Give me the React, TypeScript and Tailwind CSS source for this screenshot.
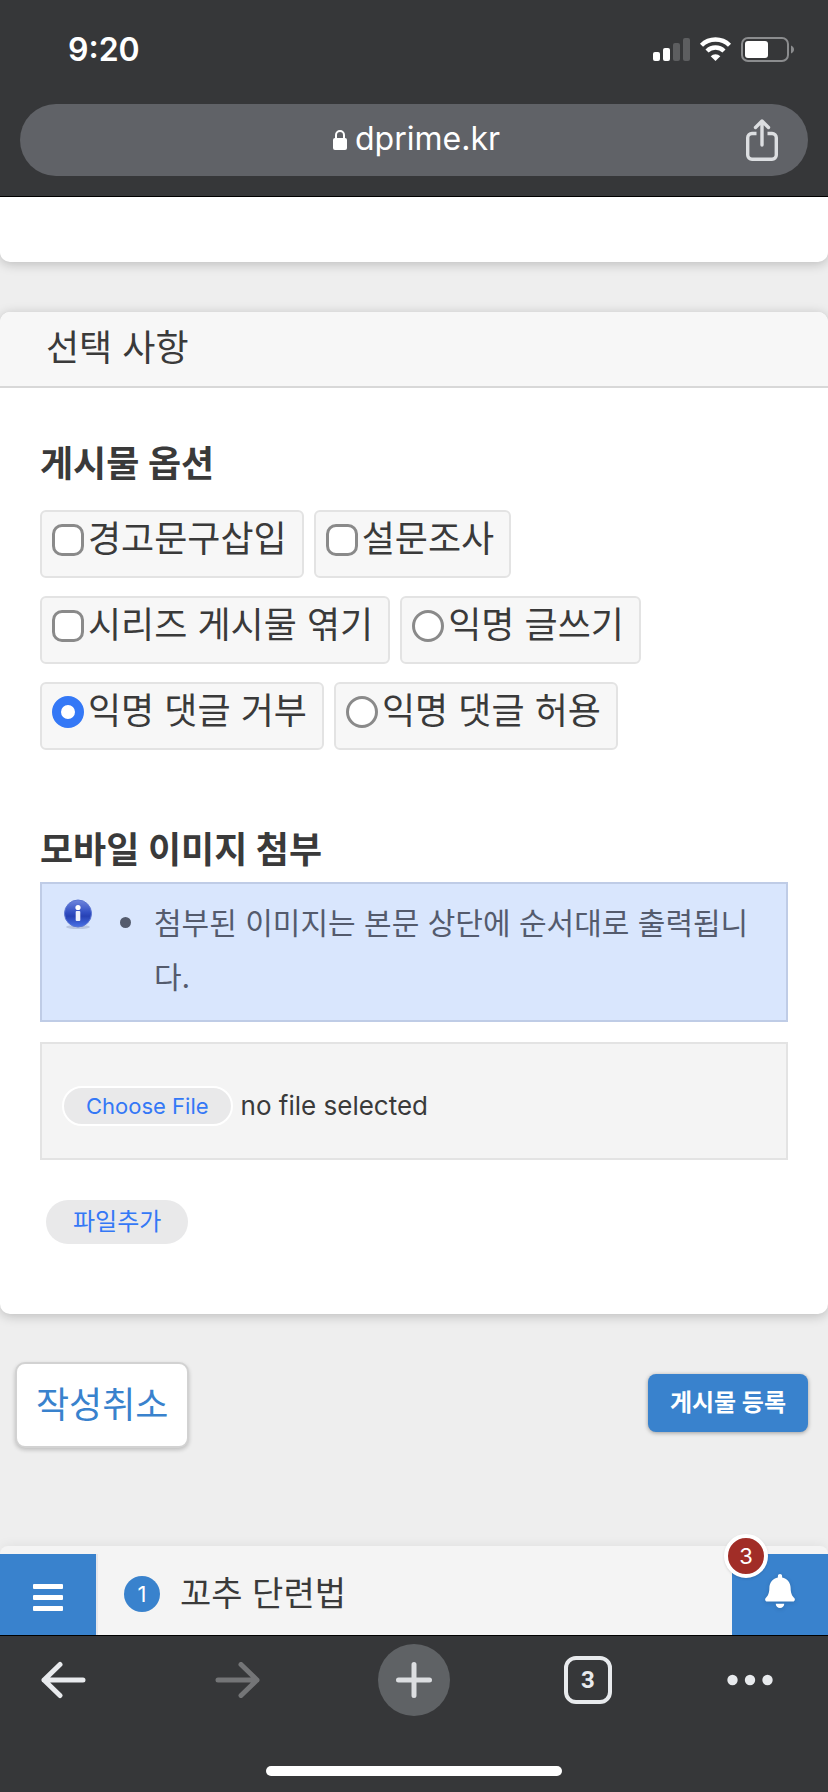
import { useRef, useState } from "react";
import { FaBell } from "react-icons/fa";

interface IOption {
  id: string;
  label: string;
  type: "checkbox" | "radio";
  group?: string;
  checked?: boolean;
}

const OPTIONS: IOption[] = [
  { id: "warning", label: "경고문구삽입", type: "checkbox" },
  { id: "survey", label: "설문조사", type: "checkbox" },
  { id: "series", label: "시리즈 게시물 엮기", type: "checkbox" },
  { id: "anon-post", label: "익명 글쓰기", type: "radio", group: "anonymous" },
  {
    id: "anon-deny",
    label: "익명 댓글 거부",
    type: "radio",
    group: "anonymous",
    checked: true,
  },
  { id: "anon-allow", label: "익명 댓글 허용", type: "radio", group: "anonymous" },
];

function StatusIcons() {
  return (
    <svg width="142" height="26" viewBox="0 0 142 26" fill="none" aria-hidden="true">
      <rect x="0" y="15" width="7" height="9" rx="2" fill="#fff" />
      <rect x="10" y="11" width="7" height="13" rx="2" fill="#fff" />
      <rect x="20" y="6" width="7" height="18" rx="2" fill="#5d5e60" />
      <rect x="30" y="1" width="7" height="23" rx="2" fill="#5d5e60" />
      <path d="M48.5 8.2a20 20 0 0 1 28 0" stroke="#fff" strokeWidth="4.4" />
      <path d="M54 14a12.2 12.2 0 0 1 17 0" stroke="#fff" strokeWidth="4.4" />
      <path d="M62.5 24l-4.8-4.8a6.8 6.8 0 0 1 9.6 0z" fill="#fff" />
      <rect x="89" y="1" width="46" height="23" rx="6" stroke="#8b8c8e" strokeWidth="2" />
      <rect x="92" y="4" width="23" height="17" rx="3" fill="#fff" />
      <path d="M138 8.5c4 1.4 4 6.6 0 8z" fill="#8b8c8e" />
    </svg>
  );
}

function BrowserHeader() {
  return (
    <header className="border-b border-black bg-[#363739] px-5 pb-5 text-white">
      <div className="flex h-[104px] items-center justify-between pb-1 pl-12 pr-[13px]">
        <span className="text-[32px] font-semibold leading-10">9:20</span>
        <StatusIcons />
      </div>
      <div className="grid h-[72px] grid-cols-[1fr_auto_1fr] items-center rounded-full bg-[#606267] pr-[29px]">
        <span />
        <div className="flex items-center gap-2 pl-[34px]">
          <svg width="14" height="20" viewBox="0 0 14 20" aria-hidden="true">
            <path d="M3 9V5a4 4 0 0 1 8 0v4" fill="none" stroke="#fff" strokeWidth="2" />
            <rect y="8" width="14" height="12" rx="2" fill="#fff" />
          </svg>
          <span className="pb-[2px] text-[32px] leading-10">dprime.kr</span>
        </div>
        <button type="button" aria-label="Share" className="justify-self-end">
          <svg
            width="34"
            height="42"
            viewBox="0 0 34 42"
            fill="none"
            stroke="#dcdee1"
            strokeWidth="3.4"
            strokeLinejoin="round"
          >
            <path d="M11.5 14.5H7a4.3 4.3 0 0 0-4.3 4.3V36A4.3 4.3 0 0 0 7 40.3h20a4.3 4.3 0 0 0 4.3-4.3V18.8a4.3 4.3 0 0 0-4.3-4.3h-4.5" />
            <path d="M17 26V2.5M10.5 8.5L17 2l6.5 6.5" strokeLinecap="round" />
          </svg>
        </button>
      </div>
    </header>
  );
}

function OptionChip({ option }: { option: IOption }) {
  const shape = option.type === "radio" ? "rounded-full" : "rounded-[10px]";
  const checked =
    option.type === "radio" ? "checked:border-[9px]" : "checked:bg-[#3478f6]";

  return (
    <label
      htmlFor={option.id}
      className="flex h-[68px] items-center gap-1 rounded-md border-2 border-[#e3e3e3] bg-[#f7f7f7] pb-2 pl-[10px] pr-[15px]"
    >
      <input
        id={option.id}
        type={option.type}
        name={option.group ?? option.id}
        defaultChecked={option.checked}
        className={`size-8 shrink-0 appearance-none border-[3px] border-[#8a8a8a] bg-white checked:border-[#3478f6] ${shape} ${checked}`}
      />
      <span className="pb-[2px] text-[36px] leading-10">{option.label}</span>
    </label>
  );
}

function InfoIcon() {
  return (
    <svg width="30" height="34" viewBox="0 -2 30 34" className="shrink-0" aria-hidden="true">
      <defs>
        <linearGradient id="info-fill" x1="0" y1="0" x2="0" y2="1">
          <stop offset="0" stopColor="#6f86dc" />
          <stop offset="0.45" stopColor="#3350c4" />
          <stop offset="0.6" stopColor="#2741b4" />
          <stop offset="1" stopColor="#4a72e6" />
        </linearGradient>
      </defs>
      <ellipse cx="15" cy="29" rx="12" ry="2" fill="#9aa5c4" opacity="0.5" />
      <circle cx="15" cy="15.5" r="13.5" fill="url(#info-fill)" stroke="#5a74d2" />
      <circle cx="15" cy="9.5" r="2.6" fill="#fff" />
      <rect x="12.7" y="13" width="4.6" height="10" rx="1" fill="#eef1fb" />
    </svg>
  );
}

function FilePicker() {
  const inputRef = useRef<HTMLInputElement>(null);
  const [fileName, setFileName] = useState("no file selected");

  return (
    <div className="mt-5 flex h-[118px] items-center gap-2 border-2 border-[#e3e3e3] bg-[#f4f4f4] px-5 pt-[10px]">
      <input
        ref={inputRef}
        type="file"
        accept="image/*"
        aria-label="모바일 이미지 첨부"
        className="hidden"
        onChange={(e) => setFileName(e.target.files?.[0]?.name ?? "no file selected")}
      />
      <button
        type="button"
        onClick={() => inputRef.current?.click()}
        className="h-10 rounded-full border-2 border-white bg-[#e9e9ea] px-[22px] text-[22px] leading-8 text-[#3478f6]"
      >
        Choose File
      </button>
      <span className="text-[26px] leading-8">{fileName}</span>
    </div>
  );
}

function OptionsCard() {
  return (
    <section className="mt-[50px] overflow-hidden rounded-[10px] bg-white shadow-[0_2px_12px_rgba(0,0,0,0.22)]">
      <h2 className="h-[76px] border-b-2 border-[#d8d8d8] bg-[#f7f7f7] px-[46px] pt-3 text-[36px] leading-[48px]">
        선택 사항
      </h2>
      <div className="px-10 pb-[70px] pt-[52px]">
        <h3 className="text-[36px] font-bold leading-[48px]">게시물 옵션</h3>
        <div className="mt-[22px] flex max-w-[640px] flex-wrap gap-x-[10px] gap-y-[18px]">
          {OPTIONS.map((option) => (
            <OptionChip key={option.id} option={option} />
          ))}
        </div>

        <h3 className="mt-[76px] text-[36px] font-bold leading-[48px]">
          모바일 이미지 첨부
        </h3>
        <div className="mt-2 flex h-[140px] border-2 border-[#bfcce6] bg-[#d9e6fd] pl-[21px] pr-6 pt-3 text-[#545b6d]">
          <InfoIcon />
          <ul className="flex-1 pl-[27px]">
            <li className="flex gap-[23px] text-[30px] leading-[54px]">
              <span className="mt-[21px] size-[11px] shrink-0 rounded-full bg-[#545b6d]" />
              <span className="break-all">
                첨부된 이미지는 본문 상단에 순서대로 출력됩니다.
              </span>
            </li>
          </ul>
        </div>

        <FilePicker />

        <button
          type="button"
          className="ml-[6px] mt-10 block h-11 rounded-full bg-[#e9e9ea] px-[27px] text-2xl text-[#3478f6]"
        >
          파일추가
        </button>
      </div>
    </section>
  );
}

function SiteBar() {
  return (
    <nav className="flex h-[81px] bg-[#f4f4f4]">
      <button
        type="button"
        aria-label="메뉴"
        className="flex w-24 flex-col items-center justify-center gap-[6px] bg-[#3982cd] pt-[5px]"
      >
        <span className="h-[5px] w-[30px] rounded-[1px] bg-white" />
        <span className="h-[5px] w-[30px] rounded-[1px] bg-white" />
        <span className="h-[5px] w-[30px] rounded-[1px] bg-white" />
      </button>
      <a
        href="#rank-1"
        className="flex flex-1 items-center gap-5 border-l-2 border-[#e6e6ea] pb-[2px] pl-[26px]"
      >
        <span className="flex size-9 items-center justify-center rounded-full bg-[#3982cd] text-[22px] leading-8 text-white">
          1
        </span>
        <span className="text-[34px] leading-10">꼬추 단련법</span>
      </a>
      <button
        type="button"
        aria-label="알림"
        className="relative flex w-24 items-center justify-center bg-[#3982cd] pb-2 text-white"
      >
        <FaBell size={34} className="drop-shadow-sm" />
        <span className="absolute -left-2 -top-5 flex size-11 items-center justify-center rounded-full border-4 border-white bg-[#a12d27] text-[22px] shadow-sm">
          3
        </span>
      </button>
    </nav>
  );
}

function ArrowIcon() {
  return (
    <svg
      width="46"
      height="38"
      viewBox="0 0 46 38"
      fill="none"
      stroke="currentColor"
      strokeWidth="5"
      strokeLinecap="round"
      strokeLinejoin="round"
    >
      <path d="M43 19H4M20 3.5L4 19l16 15.5" />
    </svg>
  );
}

function BrowserToolbar() {
  return (
    <footer className="flex h-[157px] flex-col border-t border-black bg-[#363739] pb-4 pt-2 text-[#e8eaed]">
      <div className="grid grid-cols-[126fr_224fr_128fr_220fr_104fr] items-center justify-items-center pr-[26px]">
        <button type="button" aria-label="Back">
          <ArrowIcon />
        </button>
        <button
          type="button"
          aria-label="Forward"
          disabled
          className="rotate-180 text-[#747577]"
        >
          <ArrowIcon />
        </button>
        <button
          type="button"
          aria-label="New tab"
          className="flex size-[72px] items-center justify-center rounded-full bg-[#5f6265]"
        >
          <svg
            width="38"
            height="38"
            viewBox="0 0 38 38"
            stroke="#dcdee1"
            strokeWidth="5"
            strokeLinecap="round"
          >
            <path d="M19 3.5v31M3.5 19h31" />
          </svg>
        </button>
        <button
          type="button"
          aria-label="Tabs"
          className="flex size-12 items-center justify-center rounded-xl border-4 border-[#e8eaed] font-[Roboto] text-2xl font-bold"
        >
          3
        </button>
        <button type="button" aria-label="More">
          <svg width="46" height="12" viewBox="0 0 46 12" fill="currentColor">
            <circle cx="5.5" cy="6" r="5.2" />
            <circle cx="23" cy="6" r="5.2" />
            <circle cx="40.5" cy="6" r="5.2" />
          </svg>
        </button>
      </div>
      <div className="mx-auto mt-auto h-[10px] w-[296px] rounded-full bg-white" />
    </footer>
  );
}

export default function App() {
  return (
    <div className="flex min-h-screen flex-col bg-[#eeeeee] font-[Inter,'Noto_Sans_CJK_KR',sans-serif] text-[#3a3a3a]">
      <BrowserHeader />

      <main className="flex flex-1 flex-col overflow-hidden">
        <div className="h-[65px] rounded-b-[10px] bg-white shadow-[0_2px_12px_rgba(0,0,0,0.22)]" />
        <OptionsCard />
        <div className="mt-12 flex items-center justify-between pb-10 pl-[15px] pr-5">
          <button
            type="button"
            className="h-[86px] rounded-[10px] border-2 border-[#d2d2d2] bg-white px-[19px] text-[36px] leading-10 text-[#3982cd] shadow-[0_2px_4px_rgba(0,0,0,0.2)]"
          >
            작성취소
          </button>
          <button
            type="submit"
            className="mb-1 h-[58px] rounded-lg bg-[#3982cd] px-[22px] text-2xl font-bold text-white shadow-[0_1px_4px_rgba(0,0,0,0.35)]"
          >
            게시물 등록
          </button>
        </div>
        <div className="mt-auto h-2 rounded-t-[10px] bg-[#f4f4f4] shadow-[0_0_12px_rgba(0,0,0,0.08)]" />
      </main>

      <SiteBar />
      <BrowserToolbar />
    </div>
  );
}
